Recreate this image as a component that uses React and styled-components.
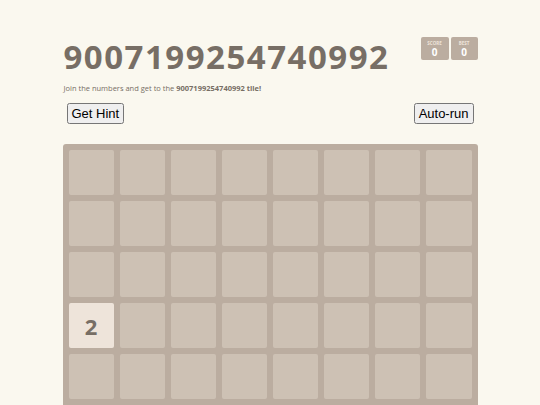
import React from "react";
import styled, { createGlobalStyle } from "styled-components";

const GlobalStyle = createGlobalStyle`
    body {
        margin: 0;
        background: #faf8ef;
        color: #776e65;
        font-family: "Open Sans", "Liberation Sans", sans-serif;
    }
`;

const Container = styled.div`
    width: 415px;
    margin: 0 auto;
    padding-top: 37px;
`;

const Heading = styled.div`
    display: flex;
    justify-content: space-between;
    align-items: flex-start;
`;

const Title = styled.h1`
    margin: 3px 0 0 1px;
    font-size: 33px;
    line-height: 33px;
    font-weight: 700;
    letter-spacing: 1.5px;
`;

const Scores = styled.div`
    display: flex;
    gap: 2px;
`;

const ScoreBox = styled.div`
    width: ${({ $w }) => $w}px;
    height: 23px;
    background: #bbada0;
    border-radius: 2px;
    display: flex;
    flex-direction: column;
    align-items: center;
    padding-top: 4px;
    box-sizing: border-box;
    color: white;
    font-weight: 700;
    .label {
        font-size: 4.5px;
        line-height: 5px;
        color: #eee4da;
        text-transform: uppercase;
    }
    .value {
        font-size: 10px;
        line-height: 12px;
    }
`;

const Intro = styled.p`
    margin: 10px 0 0 1px;
    font-size: 7.5px;
    line-height: 10px;
    color: #776e65;
    b {
        font-weight: 700;
        color: #776e65;
    }
`;

const Controls = styled.div`
    display: flex;
    justify-content: space-between;
    padding: 0 4px;
    margin-top: 10px;
`;

const Button = styled.button`
    font-family: "Liberation Sans", Arial, sans-serif;
    font-size: 13px;
    padding: 1px 3px;
`;

const Board = styled.div`
    margin-top: 20px;
    background: #bbada0;
    border-radius: 3px;
    padding: 6px;
    display: grid;
    grid-template-columns: repeat(8, 1fr);
    gap: 6px;
`;

const Cell = styled.div`
    height: 45px;
    border-radius: 2px;
    background: ${({ $value }) => ($value ? "#eee4da" : "#cdc1b4")};
    color: #776e65;
    font-weight: 700;
    font-size: 22px;
    display: flex;
    align-items: center;
    justify-content: center;
`;

const tiles = { 24: 2 };

export default function App() {
    const cells = Array.from({ length: 64 }, (_, i) => tiles[i] || 0);
    return (
        <>
            <GlobalStyle />
            <Container>
                <Heading>
                    <Title>9007199254740992</Title>
                    <Scores>
                        <ScoreBox $w={28}>
                            <span className="label">Score</span>
                            <span className="value">0</span>
                        </ScoreBox>
                        <ScoreBox $w={27}>
                            <span className="label">Best</span>
                            <span className="value">0</span>
                        </ScoreBox>
                    </Scores>
                </Heading>
                <Intro>
                    Join the numbers and get to the <b>9007199254740992 tile!</b>
                </Intro>
                <Controls>
                    <Button>Get Hint</Button>
                    <Button>Auto-run</Button>
                </Controls>
                <Board>
                    {cells.map((v, i) => (
                        <Cell key={i} $value={v}>
                            {v || ""}
                        </Cell>
                    ))}
                </Board>
            </Container>
        </>
    );
}
